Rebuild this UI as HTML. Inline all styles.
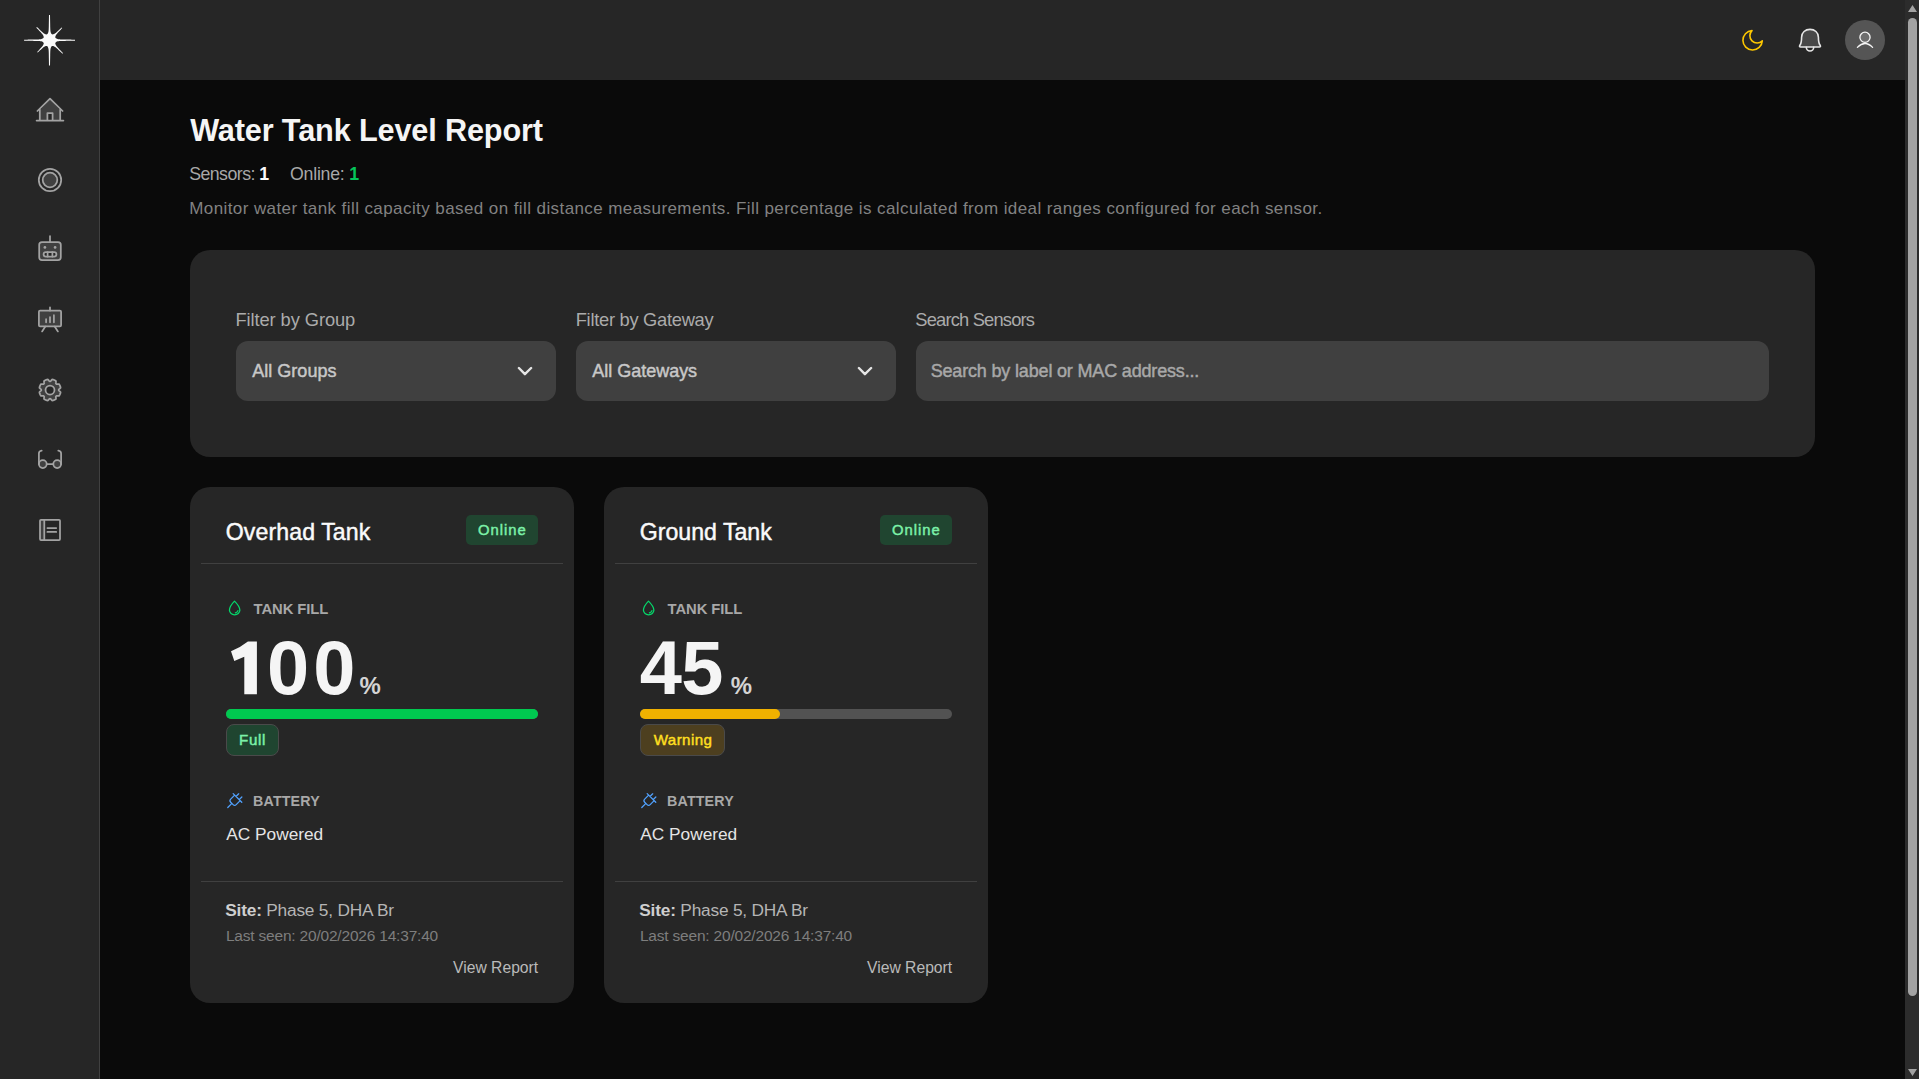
<!DOCTYPE html>
<html>
<head>
<meta charset="utf-8">
<style>
*{box-sizing:border-box;margin:0;padding:0}
html,body{width:1919px;height:1079px;overflow:hidden;background:#0a0a0a;font-family:"Liberation Sans",sans-serif;}
.abs{position:absolute}
.t{position:absolute;white-space:nowrap;line-height:1}
#sidebar{position:absolute;left:0;top:0;width:100px;height:1079px;background:#262626;border-right:1px solid #404040}
#header{position:absolute;left:100px;top:0;width:1805px;height:80px;background:#262626}
#sb{position:absolute;left:1905px;top:0;width:14px;height:1079px;background:#2c2c2c}
#thumb{position:absolute;left:3px;top:18px;width:9px;height:978px;background:#a3a3a3;border-radius:5px}
.panel{position:absolute;background:#262626;border-radius:20px}
.inp{position:absolute;background:#404040;border-radius:12px;height:60px;top:341px}
.card{position:absolute;top:487px;width:384px;height:516px;background:#262626;border-radius:20px}
.hr{position:absolute;height:1px;background:#404040;width:362px}
svg{position:absolute;left:0;top:0}
</style>
</head>
<body>
<div id="sidebar"></div>
<div id="header"></div>
<div id="sb"><div id="thumb"></div></div>
<div class="t" style="left:190.20px;top:114.70px;font-size:30.67px;font-weight:700;color:#f5f5f5;letter-spacing:-0.145px">Water Tank Level Report</div>
<div class="t" style="left:189.20px;top:166.00px;font-size:17.73px;font-weight:400;color:#a8a8a8;letter-spacing:-0.533px">Sensors: <b style='color:#fafafa;font-weight:700'>1</b></div>
<div class="t" style="left:290.00px;top:166.00px;font-size:17.73px;font-weight:400;color:#a8a8a8;letter-spacing:-0.225px">Online: <b style='color:#05c45a;font-weight:700'>1</b></div>
<div class="t" style="left:189.20px;top:200.40px;font-size:17.01px;font-weight:400;color:#828282;letter-spacing:0.414px">Monitor water tank fill capacity based on fill distance measurements. Fill percentage is calculated from ideal ranges configured for each sensor.</div>

<div class="panel" style="left:190px;top:250px;width:1625px;height:207px"></div>
<div class="inp" style="left:236px;width:320px"></div>
<div class="inp" style="left:576px;width:320px"></div>
<div class="inp" style="left:916px;width:853px"></div>
<div class="t" style="left:235.40px;top:310.50px;font-size:18.31px;font-weight:400;color:#ababab;letter-spacing:-0.079px">Filter by Group</div>
<div class="t" style="left:575.70px;top:310.50px;font-size:18.31px;font-weight:400;color:#ababab;letter-spacing:-0.275px">Filter by Gateway</div>
<div class="t" style="left:915.30px;top:310.50px;font-size:18.31px;font-weight:400;color:#ababab;letter-spacing:-0.808px">Search Sensors</div>
<div class="t" style="left:252.20px;top:362.40px;font-size:18.02px;font-weight:500;color:#c8c8c8;letter-spacing:0.022px;-webkit-text-stroke:0.45px #c8c8c8">All Groups</div>
<div class="t" style="left:592.30px;top:362.40px;font-size:18.02px;font-weight:500;color:#c8c8c8;letter-spacing:-0.027px;-webkit-text-stroke:0.45px #c8c8c8">All Gateways</div>
<div class="t" style="left:930.70px;top:362.40px;font-size:18.02px;font-weight:500;color:#a8a8a8;letter-spacing:-0.178px;-webkit-text-stroke:0.45px #a8a8a8">Search by label or MAC address...</div>

<div class="card" style="left:190px"></div>
<div class="hr" style="left:201px;top:563px"></div>
<div class="hr" style="left:201px;top:881px"></div>
<div class="abs" style="left:466px;top:515px;width:72px;height:30px;border-radius:5px;background:#204530"></div>
<div class="abs" style="left:226px;top:709px;width:312px;height:10px;border-radius:5px;background:#525252"></div>
<div class="abs" style="left:226px;top:709px;width:312.0px;height:10px;border-radius:5px;background:#00c950"></div>
<div class="abs" style="left:226px;top:724px;width:52.5px;height:32px;border-radius:8px;background:#1f4530;border:1px solid #4a4a4a"></div>
<div class="t" style="left:225.80px;top:521.10px;font-size:23.11px;font-weight:500;color:#fafafa;letter-spacing:0.091px;-webkit-text-stroke:0.45px #fafafa">Overhad Tank</div>

<div class="t" style="left:478.00px;top:522.80px;font-size:14.83px;font-weight:500;color:#7bf1a8;letter-spacing:1.000px;-webkit-text-stroke:0.45px #7bf1a8">Online</div>

<div class="t" style="left:253.60px;top:602.00px;font-size:14.83px;font-weight:700;color:#a8a8a8;letter-spacing:-0.113px">TANK FILL</div>

<div class="t" style="left:267.00px;top:629.70px;font-size:75.80px;font-weight:700;color:#f5f5f5;letter-spacing:4.200px">00</div>

<div class="t" style="left:359.40px;top:674.20px;font-size:23.94px;font-weight:700;color:#d4d4d4;letter-spacing:0.000px">%</div>

<div class="t" style="left:239.00px;top:731.70px;font-size:15.12px;font-weight:500;color:#7bf1a8;letter-spacing:0.700px;-webkit-text-stroke:0.45px #7bf1a8">Full</div>

<div class="t" style="left:253.10px;top:794.10px;font-size:14.24px;font-weight:700;color:#a8a8a8;letter-spacing:0.150px">BATTERY</div>

<div class="t" style="left:226.25px;top:826.10px;font-size:17.30px;font-weight:400;color:#e5e5e5;letter-spacing:-0.006px">AC Powered</div>

<div class="t" style="left:225.25px;top:902.10px;font-size:17.30px;font-weight:400;color:#b5b5b5;letter-spacing:-0.203px"><b style='font-weight:700;color:#cfcfcf'>Site:</b> Phase 5, DHA Br</div>

<div class="t" style="left:225.90px;top:928.25px;font-size:15.48px;font-weight:400;color:#7e7e7e;letter-spacing:-0.183px">Last seen: 20/02/2026 14:37:40</div>

<div class="t" style="left:453.10px;top:960.10px;font-size:15.70px;font-weight:400;color:#bababa;letter-spacing:-0.010px">View Report</div>

<div class="card" style="left:604px"></div>
<div class="hr" style="left:615px;top:563px"></div>
<div class="hr" style="left:615px;top:881px"></div>
<div class="abs" style="left:880px;top:515px;width:72px;height:30px;border-radius:5px;background:#204530"></div>
<div class="abs" style="left:640px;top:709px;width:312px;height:10px;border-radius:5px;background:#525252"></div>
<div class="abs" style="left:640px;top:709px;width:140.4px;height:10px;border-radius:5px;background:#f0b100"></div>
<div class="abs" style="left:640px;top:724px;width:84.5px;height:32px;border-radius:8px;background:#4d3f1f;border:1px solid #4a4a4a"></div>
<div class="t" style="left:639.80px;top:521.10px;font-size:23.11px;font-weight:500;color:#fafafa;letter-spacing:0.000px;-webkit-text-stroke:0.45px #fafafa">Ground Tank</div>

<div class="t" style="left:892.00px;top:522.80px;font-size:14.83px;font-weight:500;color:#7bf1a8;letter-spacing:1.000px;-webkit-text-stroke:0.45px #7bf1a8">Online</div>

<div class="t" style="left:667.60px;top:602.00px;font-size:14.83px;font-weight:700;color:#a8a8a8;letter-spacing:-0.112px">TANK FILL</div>

<div class="t" style="left:639.80px;top:629.70px;font-size:75.80px;font-weight:700;color:#f5f5f5;letter-spacing:-0.600px">45</div>

<div class="t" style="left:730.70px;top:674.20px;font-size:23.94px;font-weight:700;color:#d4d4d4;letter-spacing:0.000px">%</div>

<div class="t" style="left:653.70px;top:731.70px;font-size:15.12px;font-weight:500;color:#ffdf20;letter-spacing:0.433px;-webkit-text-stroke:0.45px #ffdf20">Warning</div>

<div class="t" style="left:667.10px;top:794.10px;font-size:14.24px;font-weight:700;color:#a8a8a8;letter-spacing:0.150px">BATTERY</div>

<div class="t" style="left:640.25px;top:826.10px;font-size:17.30px;font-weight:400;color:#e5e5e5;letter-spacing:-0.006px">AC Powered</div>

<div class="t" style="left:639.25px;top:902.10px;font-size:17.30px;font-weight:400;color:#b5b5b5;letter-spacing:-0.202px"><b style='font-weight:700;color:#cfcfcf'>Site:</b> Phase 5, DHA Br</div>

<div class="t" style="left:639.90px;top:928.25px;font-size:15.48px;font-weight:400;color:#7e7e7e;letter-spacing:-0.183px">Last seen: 20/02/2026 14:37:40</div>

<div class="t" style="left:867.10px;top:960.10px;font-size:15.70px;font-weight:400;color:#bababa;letter-spacing:-0.010px">View Report</div>

<svg width="1919" height="1079" viewBox="0 0 1919 1079">
<path d="M53.48,37.20 L53.47,36.65 L53.47,36.09 L53.47,35.54 L52.72,34.99 L52.00,34.44 L51.49,33.89 L51.13,33.33 L50.87,32.78 L50.69,32.23 L50.56,31.68 L50.46,31.12 L50.39,30.57 L50.34,30.02 L50.31,29.47 L50.28,28.91 L50.26,28.36 L50.24,27.81 L50.23,27.26 L50.21,26.70 L50.20,26.15 L50.19,25.60 L50.19,25.05 L50.18,24.49 L50.17,23.94 L50.16,23.39 L50.15,22.84 L50.14,22.28 L50.13,21.73 L50.12,21.18 L50.11,20.63 L50.10,20.07 L50.09,19.52 L50.08,18.97 L50.07,18.41 L50.06,17.86 L50.05,17.31 L50.04,16.76 L50.03,16.21 L50.02,15.65 L50.01,15.10 L48.99,15.10 L48.98,15.65 L48.97,16.21 L48.96,16.76 L48.95,17.31 L48.94,17.86 L48.93,18.41 L48.92,18.97 L48.91,19.52 L48.90,20.07 L48.89,20.63 L48.88,21.18 L48.87,21.73 L48.86,22.28 L48.85,22.84 L48.84,23.39 L48.83,23.94 L48.82,24.49 L48.81,25.05 L48.81,25.60 L48.80,26.15 L48.79,26.70 L48.77,27.26 L48.76,27.81 L48.74,28.36 L48.72,28.91 L48.69,29.47 L48.66,30.02 L48.61,30.57 L48.54,31.12 L48.44,31.68 L48.31,32.23 L48.13,32.78 L47.87,33.33 L47.51,33.89 L47.00,34.44 L46.28,34.99 L45.53,35.54 L45.53,36.09 L45.53,36.65 L45.52,37.20 Z" fill="#fafafa"/>
<path d="M52.50,44.18 L53.06,44.17 L53.62,44.17 L54.19,44.17 L54.75,43.35 L55.31,42.64 L55.88,42.14 L56.44,41.79 L57.00,41.54 L57.56,41.36 L58.12,41.24 L58.69,41.15 L59.25,41.08 L59.81,41.04 L60.38,41.00 L60.94,40.97 L61.50,40.95 L62.06,40.94 L62.62,40.93 L63.19,40.91 L63.75,40.90 L64.31,40.89 L64.88,40.89 L65.44,40.88 L66.00,40.87 L66.56,40.86 L67.12,40.85 L67.69,40.84 L68.25,40.83 L68.81,40.82 L69.38,40.81 L69.94,40.80 L70.50,40.79 L71.06,40.78 L71.62,40.77 L72.19,40.76 L72.75,40.75 L73.31,40.74 L73.88,40.73 L74.44,40.72 L75.00,40.71 L75.00,39.69 L74.44,39.68 L73.88,39.67 L73.31,39.66 L72.75,39.65 L72.19,39.64 L71.62,39.63 L71.06,39.62 L70.50,39.61 L69.94,39.60 L69.38,39.59 L68.81,39.58 L68.25,39.57 L67.69,39.56 L67.12,39.55 L66.56,39.54 L66.00,39.53 L65.44,39.52 L64.88,39.51 L64.31,39.51 L63.75,39.50 L63.19,39.49 L62.62,39.47 L62.06,39.46 L61.50,39.45 L60.94,39.43 L60.38,39.40 L59.81,39.36 L59.25,39.32 L58.69,39.25 L58.12,39.16 L57.56,39.04 L57.00,38.86 L56.44,38.61 L55.88,38.26 L55.31,37.76 L54.75,37.05 L54.19,36.23 L53.62,36.23 L53.06,36.23 L52.50,36.22 Z" fill="#fafafa"/>
<path d="M45.52,43.20 L45.53,43.76 L45.53,44.32 L45.53,44.87 L46.32,45.43 L47.03,45.99 L47.53,46.55 L47.89,47.10 L48.14,47.66 L48.32,48.22 L48.45,48.78 L48.54,49.33 L48.61,49.89 L48.66,50.45 L48.70,51.01 L48.72,51.56 L48.74,52.12 L48.76,52.68 L48.77,53.23 L48.79,53.79 L48.80,54.35 L48.81,54.91 L48.81,55.47 L48.82,56.02 L48.83,56.58 L48.84,57.14 L48.85,57.70 L48.86,58.25 L48.87,58.81 L48.88,59.37 L48.89,59.93 L48.90,60.48 L48.91,61.04 L48.92,61.60 L48.93,62.16 L48.94,62.71 L48.95,63.27 L48.96,63.83 L48.97,64.39 L48.98,64.94 L48.99,65.50 L50.01,65.50 L50.02,64.94 L50.03,64.39 L50.04,63.83 L50.05,63.27 L50.06,62.71 L50.07,62.16 L50.08,61.60 L50.09,61.04 L50.10,60.48 L50.11,59.93 L50.12,59.37 L50.13,58.81 L50.14,58.25 L50.15,57.70 L50.16,57.14 L50.17,56.58 L50.18,56.02 L50.19,55.47 L50.19,54.91 L50.20,54.35 L50.21,53.79 L50.23,53.23 L50.24,52.68 L50.26,52.12 L50.28,51.56 L50.30,51.01 L50.34,50.45 L50.39,49.89 L50.46,49.33 L50.55,48.78 L50.68,48.22 L50.86,47.66 L51.11,47.10 L51.47,46.55 L51.97,45.99 L52.68,45.43 L53.47,44.87 L53.47,44.32 L53.47,43.76 L53.48,43.20 Z" fill="#fafafa"/>
<path d="M46.50,36.22 L45.94,36.23 L45.38,36.23 L44.82,36.23 L44.26,37.03 L43.70,37.74 L43.14,38.24 L42.58,38.60 L42.02,38.85 L41.46,39.03 L40.90,39.16 L40.34,39.25 L39.78,39.31 L39.22,39.36 L38.66,39.40 L38.10,39.42 L37.54,39.44 L36.98,39.46 L36.42,39.47 L35.86,39.49 L35.30,39.50 L34.74,39.51 L34.18,39.51 L33.62,39.52 L33.06,39.53 L32.50,39.54 L31.94,39.55 L31.38,39.56 L30.82,39.57 L30.26,39.58 L29.70,39.59 L29.14,39.60 L28.58,39.61 L28.02,39.62 L27.46,39.63 L26.90,39.64 L26.34,39.65 L25.78,39.66 L25.22,39.67 L24.66,39.68 L24.10,39.69 L24.10,40.71 L24.66,40.72 L25.22,40.73 L25.78,40.74 L26.34,40.75 L26.90,40.76 L27.46,40.77 L28.02,40.78 L28.58,40.79 L29.14,40.80 L29.70,40.81 L30.26,40.82 L30.82,40.83 L31.38,40.84 L31.94,40.85 L32.50,40.86 L33.06,40.87 L33.62,40.88 L34.18,40.89 L34.74,40.89 L35.30,40.90 L35.86,40.91 L36.42,40.93 L36.98,40.94 L37.54,40.96 L38.10,40.98 L38.66,41.00 L39.22,41.04 L39.78,41.09 L40.34,41.15 L40.90,41.24 L41.46,41.37 L42.02,41.55 L42.58,41.80 L43.14,42.16 L43.70,42.66 L44.26,43.37 L44.82,44.17 L45.38,44.17 L45.94,44.17 L46.50,44.18 Z" fill="#fafafa"/>
<path d="M54.35,40.80 L54.60,40.54 L54.86,40.28 L55.12,40.02 L55.37,39.77 L55.57,39.44 L55.37,38.73 L55.27,38.12 L55.24,37.57 L55.27,37.09 L55.35,36.64 L55.46,36.24 L55.60,35.87 L55.77,35.51 L55.95,35.18 L56.15,34.86 L56.36,34.55 L56.57,34.26 L56.80,33.96 L57.03,33.68 L57.27,33.40 L57.51,33.12 L57.75,32.85 L57.99,32.58 L58.24,32.31 L58.49,32.04 L58.73,31.77 L58.98,31.50 L59.23,31.24 L59.48,30.97 L59.74,30.71 L59.99,30.44 L60.24,30.18 L60.49,29.91 L60.74,29.65 L60.99,29.38 L61.24,29.12 L61.50,28.85 L61.75,28.59 L62.00,28.32 L62.25,28.06 L61.64,27.45 L61.38,27.70 L61.11,27.95 L60.85,28.20 L60.58,28.46 L60.32,28.71 L60.05,28.96 L59.79,29.21 L59.52,29.46 L59.26,29.71 L58.99,29.96 L58.73,30.22 L58.46,30.47 L58.20,30.72 L57.93,30.97 L57.66,31.21 L57.39,31.46 L57.12,31.71 L56.85,31.95 L56.58,32.19 L56.30,32.43 L56.02,32.67 L55.74,32.90 L55.44,33.13 L55.15,33.34 L54.84,33.55 L54.52,33.75 L54.19,33.93 L53.83,34.10 L53.46,34.24 L53.06,34.35 L52.61,34.43 L52.13,34.46 L51.58,34.43 L50.97,34.33 L50.26,34.13 L49.93,34.33 L49.68,34.58 L49.42,34.84 L49.16,35.10 L48.90,35.35 Z" fill="#fafafa"/>
<path d="M48.90,45.05 L49.17,45.32 L49.45,45.60 L49.73,45.87 L50.00,46.14 L50.51,46.19 L51.23,46.02 L51.85,45.95 L52.40,45.96 L52.89,46.02 L53.33,46.12 L53.74,46.27 L54.12,46.44 L54.48,46.63 L54.82,46.84 L55.15,47.07 L55.47,47.30 L55.78,47.54 L56.08,47.79 L56.38,48.04 L56.67,48.30 L56.96,48.56 L57.25,48.82 L57.54,49.09 L57.83,49.35 L58.11,49.62 L58.39,49.89 L58.68,50.16 L58.96,50.43 L59.24,50.69 L59.53,50.96 L59.81,51.23 L60.09,51.50 L60.37,51.77 L60.65,52.04 L60.94,52.31 L61.22,52.58 L61.50,52.85 L61.78,53.12 L62.07,53.39 L62.35,53.66 L62.96,53.05 L62.69,52.77 L62.42,52.48 L62.15,52.20 L61.88,51.92 L61.61,51.64 L61.34,51.35 L61.07,51.07 L60.80,50.79 L60.53,50.51 L60.26,50.23 L59.99,49.94 L59.73,49.66 L59.46,49.38 L59.19,49.09 L58.92,48.81 L58.65,48.53 L58.39,48.24 L58.12,47.95 L57.86,47.66 L57.60,47.37 L57.34,47.08 L57.09,46.78 L56.84,46.48 L56.60,46.17 L56.37,45.85 L56.14,45.52 L55.93,45.18 L55.74,44.82 L55.57,44.44 L55.42,44.03 L55.32,43.59 L55.26,43.10 L55.25,42.55 L55.32,41.93 L55.49,41.21 L55.44,40.70 L55.17,40.43 L54.90,40.15 L54.62,39.87 L54.35,39.60 Z" fill="#fafafa"/>
<path d="M44.65,39.60 L44.41,39.85 L44.16,40.09 L43.92,40.34 L43.67,40.59 L43.42,40.84 L43.59,41.50 L43.71,42.11 L43.75,42.66 L43.74,43.14 L43.69,43.58 L43.60,43.98 L43.47,44.35 L43.33,44.70 L43.16,45.03 L42.98,45.35 L42.79,45.65 L42.58,45.94 L42.37,46.22 L42.15,46.50 L41.93,46.77 L41.71,47.04 L41.48,47.31 L41.24,47.57 L41.01,47.83 L40.77,48.09 L40.54,48.35 L40.30,48.61 L40.06,48.86 L39.82,49.12 L39.58,49.37 L39.34,49.63 L39.10,49.88 L38.86,50.14 L38.62,50.39 L38.38,50.64 L38.14,50.90 L37.90,51.15 L37.66,51.41 L37.42,51.66 L37.17,51.92 L37.78,52.53 L38.04,52.28 L38.29,52.04 L38.55,51.80 L38.80,51.56 L39.06,51.32 L39.31,51.08 L39.56,50.84 L39.82,50.60 L40.07,50.36 L40.33,50.12 L40.58,49.88 L40.84,49.64 L41.09,49.40 L41.35,49.16 L41.61,48.93 L41.87,48.69 L42.13,48.46 L42.39,48.22 L42.66,47.99 L42.93,47.77 L43.20,47.55 L43.48,47.33 L43.76,47.12 L44.05,46.91 L44.35,46.72 L44.67,46.54 L45.00,46.37 L45.35,46.23 L45.72,46.10 L46.12,46.01 L46.56,45.96 L47.04,45.95 L47.59,45.99 L48.20,46.11 L48.86,46.28 L49.11,46.03 L49.36,45.78 L49.61,45.54 L49.85,45.29 L50.10,45.05 Z" fill="#fafafa"/>
<path d="M50.10,35.35 L49.83,35.09 L49.56,34.82 L49.29,34.55 L49.02,34.28 L48.59,34.18 L47.88,34.36 L47.25,34.44 L46.71,34.45 L46.22,34.40 L45.78,34.31 L45.37,34.18 L44.99,34.02 L44.64,33.84 L44.30,33.64 L43.97,33.42 L43.66,33.20 L43.35,32.97 L43.06,32.73 L42.76,32.48 L42.48,32.23 L42.19,31.98 L41.91,31.73 L41.63,31.47 L41.35,31.21 L41.07,30.95 L40.79,30.69 L40.52,30.43 L40.24,30.17 L39.96,29.91 L39.69,29.65 L39.41,29.39 L39.14,29.12 L38.86,28.86 L38.59,28.60 L38.31,28.34 L38.04,28.07 L37.76,27.81 L37.49,27.55 L37.21,27.29 L36.93,27.03 L36.33,27.63 L36.59,27.91 L36.85,28.19 L37.11,28.46 L37.37,28.74 L37.64,29.01 L37.90,29.29 L38.16,29.56 L38.42,29.84 L38.69,30.11 L38.95,30.39 L39.21,30.66 L39.47,30.94 L39.73,31.22 L39.99,31.49 L40.25,31.77 L40.51,32.05 L40.77,32.33 L41.03,32.61 L41.28,32.89 L41.53,33.18 L41.78,33.46 L42.03,33.76 L42.27,34.05 L42.50,34.36 L42.72,34.67 L42.94,35.00 L43.14,35.34 L43.32,35.69 L43.48,36.07 L43.61,36.48 L43.70,36.92 L43.75,37.41 L43.74,37.95 L43.66,38.58 L43.48,39.29 L43.58,39.72 L43.85,39.99 L44.12,40.26 L44.39,40.53 L44.65,40.80 Z" fill="#fafafa"/>
<circle cx="49.5" cy="40.2" r="4.9" fill="#fafafa"/>
<path d="M39.8,110.6 V120.6 H60.2 V110.6 L50,99.3 Z" fill="#404040"/>
<rect x="47.9" y="113.3" width="4.2" height="7.3" fill="#262626"/>
<path d="M37.4,111 L50,98.6 L62.6,111 M39.8,108.6 V120.6 M60.2,108.6 V120.6 M36.6,120.6 H63.4 M47.4,120.6 V113 H52.6 V120.6" fill="none" stroke="#a3a3a3" stroke-width="1.75" stroke-linecap="round" stroke-linejoin="round"/>
<circle cx="50" cy="180" r="7.3" fill="#404040"/>
<circle cx="50" cy="180" r="11.2" fill="none" stroke="#a3a3a3" stroke-width="1.75" stroke-linecap="round" stroke-linejoin="round"/><circle cx="50" cy="180" r="7.3" fill="none" stroke="#a3a3a3" stroke-width="1.75" stroke-linecap="round" stroke-linejoin="round"/>
<rect x="39.2" y="242" width="21.6" height="18.1" rx="2.8" fill="#404040"/>
<rect x="43.6" y="252" width="12.8" height="4.6" rx="2.3" fill="#262626"/>
<rect x="39.2" y="242" width="21.6" height="18.1" rx="2.8" fill="none" stroke="#a3a3a3" stroke-width="1.75" stroke-linecap="round" stroke-linejoin="round"/>
<path d="M50,236 V242" fill="none" stroke="#a3a3a3" stroke-width="1.75" stroke-linecap="round" stroke-linejoin="round"/>
<rect x="43.6" y="252" width="12.8" height="4.6" rx="2.3" fill="none" stroke="#a3a3a3" stroke-width="1.75" stroke-linecap="round" stroke-linejoin="round"/>
<path d="M47.6,252 V256.6 M52.4,252 V256.6" fill="none" stroke="#a3a3a3" stroke-width="1.75" stroke-linecap="round" stroke-linejoin="round" stroke-width="1.3"/>
<circle cx="44.9" cy="247.4" r="1.35" fill="#a3a3a3"/><circle cx="55.1" cy="247.4" r="1.35" fill="#a3a3a3"/>
<rect x="38.9" y="310.6" width="22.2" height="15.8" rx="1.2" fill="#404040"/>
<rect x="38.9" y="310.6" width="22.2" height="15.8" rx="1.2" fill="none" stroke="#a3a3a3" stroke-width="1.75" stroke-linecap="round" stroke-linejoin="round"/>
<path d="M50,307.3 V310.6 M45.3,326.6 L42.1,331.4 M54.7,326.6 L57.9,331.4 M46.1,319.2 V322.3 M50,317 V322.3 M53.9,315.2 V322.3" fill="none" stroke="#a3a3a3" stroke-width="1.75" stroke-linecap="round" stroke-linejoin="round"/>
<path d="M50.00,381.25 L50.21,381.25 L50.43,381.26 L50.65,381.12 L50.90,380.85 L51.17,380.49 L51.47,380.10 L51.78,379.76 L52.09,379.51 L52.38,379.42 L52.64,379.48 L52.89,379.54 L53.15,379.62 L53.40,379.70 L53.66,379.78 L53.90,379.88 L54.15,379.98 L54.40,380.08 L54.64,380.19 L54.88,380.31 L55.11,380.43 L55.35,380.56 L55.58,380.69 L55.80,380.84 L55.94,381.11 L55.99,381.50 L55.96,381.96 L55.90,382.44 L55.83,382.89 L55.81,383.26 L55.88,383.51 L56.03,383.66 L56.19,383.81 L56.34,383.97 L56.49,384.12 L56.74,384.19 L57.11,384.17 L57.56,384.10 L58.04,384.04 L58.50,384.01 L58.89,384.06 L59.16,384.20 L59.31,384.42 L59.44,384.65 L59.57,384.89 L59.69,385.12 L59.81,385.36 L59.92,385.60 L60.02,385.85 L60.12,386.10 L60.22,386.34 L60.30,386.60 L60.38,386.85 L60.46,387.11 L60.52,387.36 L60.58,387.62 L60.49,387.91 L60.24,388.22 L59.90,388.53 L59.51,388.83 L59.15,389.10 L58.88,389.35 L58.74,389.57 L58.75,389.79 L58.75,390.00 L58.75,390.21 L58.74,390.43 L58.88,390.65 L59.15,390.90 L59.51,391.17 L59.90,391.47 L60.24,391.78 L60.49,392.09 L60.58,392.38 L60.52,392.64 L60.46,392.89 L60.38,393.15 L60.30,393.40 L60.22,393.66 L60.12,393.90 L60.02,394.15 L59.92,394.40 L59.81,394.64 L59.69,394.88 L59.57,395.11 L59.44,395.35 L59.31,395.58 L59.16,395.80 L58.89,395.94 L58.50,395.99 L58.04,395.96 L57.56,395.90 L57.11,395.83 L56.74,395.81 L56.49,395.88 L56.34,396.03 L56.19,396.19 L56.03,396.34 L55.88,396.49 L55.81,396.74 L55.83,397.11 L55.90,397.56 L55.96,398.04 L55.99,398.50 L55.94,398.89 L55.80,399.16 L55.58,399.31 L55.35,399.44 L55.11,399.57 L54.88,399.69 L54.64,399.81 L54.40,399.92 L54.15,400.02 L53.90,400.12 L53.66,400.22 L53.40,400.30 L53.15,400.38 L52.89,400.46 L52.64,400.52 L52.38,400.58 L52.09,400.49 L51.78,400.24 L51.47,399.90 L51.17,399.51 L50.90,399.15 L50.65,398.88 L50.43,398.74 L50.21,398.75 L50.00,398.75 L49.79,398.75 L49.57,398.74 L49.35,398.88 L49.10,399.15 L48.83,399.51 L48.53,399.90 L48.22,400.24 L47.91,400.49 L47.62,400.58 L47.36,400.52 L47.11,400.46 L46.85,400.38 L46.60,400.30 L46.34,400.22 L46.10,400.12 L45.85,400.02 L45.60,399.92 L45.36,399.81 L45.12,399.69 L44.89,399.57 L44.65,399.44 L44.42,399.31 L44.20,399.16 L44.06,398.89 L44.01,398.50 L44.04,398.04 L44.10,397.56 L44.17,397.11 L44.19,396.74 L44.12,396.49 L43.97,396.34 L43.81,396.19 L43.66,396.03 L43.51,395.88 L43.26,395.81 L42.89,395.83 L42.44,395.90 L41.96,395.96 L41.50,395.99 L41.11,395.94 L40.84,395.80 L40.69,395.58 L40.56,395.35 L40.43,395.11 L40.31,394.88 L40.19,394.64 L40.08,394.40 L39.98,394.15 L39.88,393.90 L39.78,393.66 L39.70,393.40 L39.62,393.15 L39.54,392.89 L39.48,392.64 L39.42,392.38 L39.51,392.09 L39.76,391.78 L40.10,391.47 L40.49,391.17 L40.85,390.90 L41.12,390.65 L41.26,390.43 L41.25,390.21 L41.25,390.00 L41.25,389.79 L41.26,389.57 L41.12,389.35 L40.85,389.10 L40.49,388.83 L40.10,388.53 L39.76,388.22 L39.51,387.91 L39.42,387.62 L39.48,387.36 L39.54,387.11 L39.62,386.85 L39.70,386.60 L39.78,386.34 L39.88,386.10 L39.98,385.85 L40.08,385.60 L40.19,385.36 L40.31,385.12 L40.43,384.89 L40.56,384.65 L40.69,384.42 L40.84,384.20 L41.11,384.06 L41.50,384.01 L41.96,384.04 L42.44,384.10 L42.89,384.17 L43.26,384.19 L43.51,384.12 L43.66,383.97 L43.81,383.81 L43.97,383.66 L44.12,383.51 L44.19,383.26 L44.17,382.89 L44.10,382.44 L44.04,381.96 L44.01,381.50 L44.06,381.11 L44.20,380.84 L44.42,380.69 L44.65,380.56 L44.89,380.43 L45.12,380.31 L45.36,380.19 L45.60,380.08 L45.85,379.98 L46.10,379.88 L46.34,379.78 L46.60,379.70 L46.85,379.62 L47.11,379.54 L47.36,379.48 L47.62,379.42 L47.91,379.51 L48.22,379.76 L48.53,380.10 L48.83,380.49 L49.10,380.85 L49.35,381.12 L49.57,381.26 L49.79,381.25 Z" fill="#404040"/>
<circle cx="50" cy="390" r="4.5" fill="#262626"/>
<path d="M50.00,381.25 L50.21,381.25 L50.43,381.26 L50.65,381.12 L50.90,380.85 L51.17,380.49 L51.47,380.10 L51.78,379.76 L52.09,379.51 L52.38,379.42 L52.64,379.48 L52.89,379.54 L53.15,379.62 L53.40,379.70 L53.66,379.78 L53.90,379.88 L54.15,379.98 L54.40,380.08 L54.64,380.19 L54.88,380.31 L55.11,380.43 L55.35,380.56 L55.58,380.69 L55.80,380.84 L55.94,381.11 L55.99,381.50 L55.96,381.96 L55.90,382.44 L55.83,382.89 L55.81,383.26 L55.88,383.51 L56.03,383.66 L56.19,383.81 L56.34,383.97 L56.49,384.12 L56.74,384.19 L57.11,384.17 L57.56,384.10 L58.04,384.04 L58.50,384.01 L58.89,384.06 L59.16,384.20 L59.31,384.42 L59.44,384.65 L59.57,384.89 L59.69,385.12 L59.81,385.36 L59.92,385.60 L60.02,385.85 L60.12,386.10 L60.22,386.34 L60.30,386.60 L60.38,386.85 L60.46,387.11 L60.52,387.36 L60.58,387.62 L60.49,387.91 L60.24,388.22 L59.90,388.53 L59.51,388.83 L59.15,389.10 L58.88,389.35 L58.74,389.57 L58.75,389.79 L58.75,390.00 L58.75,390.21 L58.74,390.43 L58.88,390.65 L59.15,390.90 L59.51,391.17 L59.90,391.47 L60.24,391.78 L60.49,392.09 L60.58,392.38 L60.52,392.64 L60.46,392.89 L60.38,393.15 L60.30,393.40 L60.22,393.66 L60.12,393.90 L60.02,394.15 L59.92,394.40 L59.81,394.64 L59.69,394.88 L59.57,395.11 L59.44,395.35 L59.31,395.58 L59.16,395.80 L58.89,395.94 L58.50,395.99 L58.04,395.96 L57.56,395.90 L57.11,395.83 L56.74,395.81 L56.49,395.88 L56.34,396.03 L56.19,396.19 L56.03,396.34 L55.88,396.49 L55.81,396.74 L55.83,397.11 L55.90,397.56 L55.96,398.04 L55.99,398.50 L55.94,398.89 L55.80,399.16 L55.58,399.31 L55.35,399.44 L55.11,399.57 L54.88,399.69 L54.64,399.81 L54.40,399.92 L54.15,400.02 L53.90,400.12 L53.66,400.22 L53.40,400.30 L53.15,400.38 L52.89,400.46 L52.64,400.52 L52.38,400.58 L52.09,400.49 L51.78,400.24 L51.47,399.90 L51.17,399.51 L50.90,399.15 L50.65,398.88 L50.43,398.74 L50.21,398.75 L50.00,398.75 L49.79,398.75 L49.57,398.74 L49.35,398.88 L49.10,399.15 L48.83,399.51 L48.53,399.90 L48.22,400.24 L47.91,400.49 L47.62,400.58 L47.36,400.52 L47.11,400.46 L46.85,400.38 L46.60,400.30 L46.34,400.22 L46.10,400.12 L45.85,400.02 L45.60,399.92 L45.36,399.81 L45.12,399.69 L44.89,399.57 L44.65,399.44 L44.42,399.31 L44.20,399.16 L44.06,398.89 L44.01,398.50 L44.04,398.04 L44.10,397.56 L44.17,397.11 L44.19,396.74 L44.12,396.49 L43.97,396.34 L43.81,396.19 L43.66,396.03 L43.51,395.88 L43.26,395.81 L42.89,395.83 L42.44,395.90 L41.96,395.96 L41.50,395.99 L41.11,395.94 L40.84,395.80 L40.69,395.58 L40.56,395.35 L40.43,395.11 L40.31,394.88 L40.19,394.64 L40.08,394.40 L39.98,394.15 L39.88,393.90 L39.78,393.66 L39.70,393.40 L39.62,393.15 L39.54,392.89 L39.48,392.64 L39.42,392.38 L39.51,392.09 L39.76,391.78 L40.10,391.47 L40.49,391.17 L40.85,390.90 L41.12,390.65 L41.26,390.43 L41.25,390.21 L41.25,390.00 L41.25,389.79 L41.26,389.57 L41.12,389.35 L40.85,389.10 L40.49,388.83 L40.10,388.53 L39.76,388.22 L39.51,387.91 L39.42,387.62 L39.48,387.36 L39.54,387.11 L39.62,386.85 L39.70,386.60 L39.78,386.34 L39.88,386.10 L39.98,385.85 L40.08,385.60 L40.19,385.36 L40.31,385.12 L40.43,384.89 L40.56,384.65 L40.69,384.42 L40.84,384.20 L41.11,384.06 L41.50,384.01 L41.96,384.04 L42.44,384.10 L42.89,384.17 L43.26,384.19 L43.51,384.12 L43.66,383.97 L43.81,383.81 L43.97,383.66 L44.12,383.51 L44.19,383.26 L44.17,382.89 L44.10,382.44 L44.04,381.96 L44.01,381.50 L44.06,381.11 L44.20,380.84 L44.42,380.69 L44.65,380.56 L44.89,380.43 L45.12,380.31 L45.36,380.19 L45.60,380.08 L45.85,379.98 L46.10,379.88 L46.34,379.78 L46.60,379.70 L46.85,379.62 L47.11,379.54 L47.36,379.48 L47.62,379.42 L47.91,379.51 L48.22,379.76 L48.53,380.10 L48.83,380.49 L49.10,380.85 L49.35,381.12 L49.57,381.26 L49.79,381.25 Z" fill="none" stroke="#a3a3a3" stroke-width="1.75" stroke-linecap="round" stroke-linejoin="round"/>
<circle cx="50" cy="390" r="4.5" fill="none" stroke="#a3a3a3" stroke-width="1.75" stroke-linecap="round" stroke-linejoin="round"/>
<circle cx="42.8" cy="464.1" r="3.9" fill="#404040"/><circle cx="57.2" cy="464.1" r="3.9" fill="#404040"/>
<circle cx="42.8" cy="464.1" r="3.9" fill="none" stroke="#a3a3a3" stroke-width="1.75" stroke-linecap="round" stroke-linejoin="round"/><circle cx="57.2" cy="464.1" r="3.9" fill="none" stroke="#a3a3a3" stroke-width="1.75" stroke-linecap="round" stroke-linejoin="round"/>
<path d="M46.7,464.1 H53.3 M38.9,464.1 V453.6 Q38.9,451 41.7,450.7 M61.1,464.1 V453.6 Q61.1,451 58.3,450.7" fill="none" stroke="#a3a3a3" stroke-width="1.75" stroke-linecap="round" stroke-linejoin="round"/>
<rect x="40" y="519.8" width="4.3" height="20.2" fill="#404040"/>
<rect x="40" y="519.8" width="20" height="20.2" rx="1" fill="none" stroke="#a3a3a3" stroke-width="1.75" stroke-linecap="round" stroke-linejoin="round"/>
<path d="M44.3,519.8 V540 M47.4,528.1 H56.2 M47.4,531.9 H56.2" fill="none" stroke="#a3a3a3" stroke-width="1.75" stroke-linecap="round" stroke-linejoin="round"/>
<path d="M1752,30.6 A9.7,9.7 0 1 0 1762.3,40.9 A7.0,7.0 0 0 1 1752,30.6 Z" fill="none" stroke-linecap="round" stroke-linejoin="round" stroke="#fdc700" stroke-width="1.6"/>
<path d="M1801.6,37.2 C1801.6,32.4 1805.3,29.4 1810,29.4 C1814.7,29.4 1818.4,32.4 1818.4,37.2 C1818.4,42.2 1819.4,44.4 1820.3,45.6 Q1820.9,47 1819.4,47 L1800.6,47 Q1799.1,47 1799.7,45.6 C1800.6,44.4 1801.6,42.2 1801.6,37.2 Z" fill="#484848" stroke="#e5e5e5" stroke-width="1.6" stroke-linejoin="round"/>
<path d="M1806.3,47.3 A3.7,3.7 0 0 0 1813.7,47.3" fill="none" stroke-linecap="round" stroke-linejoin="round" stroke="#e5e5e5" stroke-width="1.6"/>
<circle cx="1865" cy="40" r="20" fill="#555555"/>
<circle cx="1865" cy="37.3" r="5.1" fill="#6e6e6e" stroke="#f5f5f5" stroke-width="1.3"/>
<path d="M1857.4,47.4 Q1865,39.6 1872.6,47.4" fill="none" stroke-linecap="round" stroke-linejoin="round" stroke="#f5f5f5" stroke-width="1.3"/>
<path d="M518.9,368 L524.9,374.2 L531.1,368 M858.9,368 L864.9,374.2 L871.1,368" fill="none" stroke="#e5e5e5" stroke-width="2.4" stroke-linecap="round" stroke-linejoin="round"/>
<path d="M234.5,601.1 C231.5,604.2 229.4,607.2 229.4,610.2 A5.3,5.3 0 0 0 239.9,610.2 C239.9,607.2 237.6,604.2 234.5,601.1 Z M235.4,612.9 Q237.4,612.3 237.9,610.6" fill="none" stroke="#05d66a" stroke-width="1.25" stroke-linecap="round" stroke-linejoin="round"/><path d="M648.5,601.1 C645.5,604.2 643.4,607.2 643.4,610.2 A5.3,5.3 0 0 0 653.9,610.2 C653.9,607.2 651.6,604.2 648.5,601.1 Z M649.4,612.9 Q651.4,612.3 651.9,610.6" fill="none" stroke="#05d66a" stroke-width="1.25" stroke-linecap="round" stroke-linejoin="round"/>
<path d="M244.3,694.2 V656.7 L234.3,661 L231,651.3 Q240.5,647.6 247.9,641.6 H256.9 V694.2 Z" fill="#f5f5f5"/>
<g transform="translate(235 800.3) rotate(45)" fill="none" stroke="#51a2ff" stroke-width="1.25" stroke-linecap="round" stroke-linejoin="round"><path d="M-6,-3.4 H6.2 M-3.9,-3.4 V2.2 Q-3.9,4.4 -1.7,4.4 H1.7 Q3.9,4.4 3.9,2.2 V-3.4 M-2,-3.4 V-7.2 M2.5,-3.4 V-7.2 M0,4.4 V10.2"/></g><g transform="translate(649 800.3) rotate(45)" fill="none" stroke="#51a2ff" stroke-width="1.25" stroke-linecap="round" stroke-linejoin="round"><path d="M-6,-3.4 H6.2 M-3.9,-3.4 V2.2 Q-3.9,4.4 -1.7,4.4 H1.7 Q3.9,4.4 3.9,2.2 V-3.4 M-2,-3.4 V-7.2 M2.5,-3.4 V-7.2 M0,4.4 V10.2"/></g>
<path d="M1908,12 L1912.5,5 L1917,12 Z M1908,1069 L1912.5,1076 L1917,1069 Z" fill="#a3a3a3"/>
</svg>
</body>
</html>
